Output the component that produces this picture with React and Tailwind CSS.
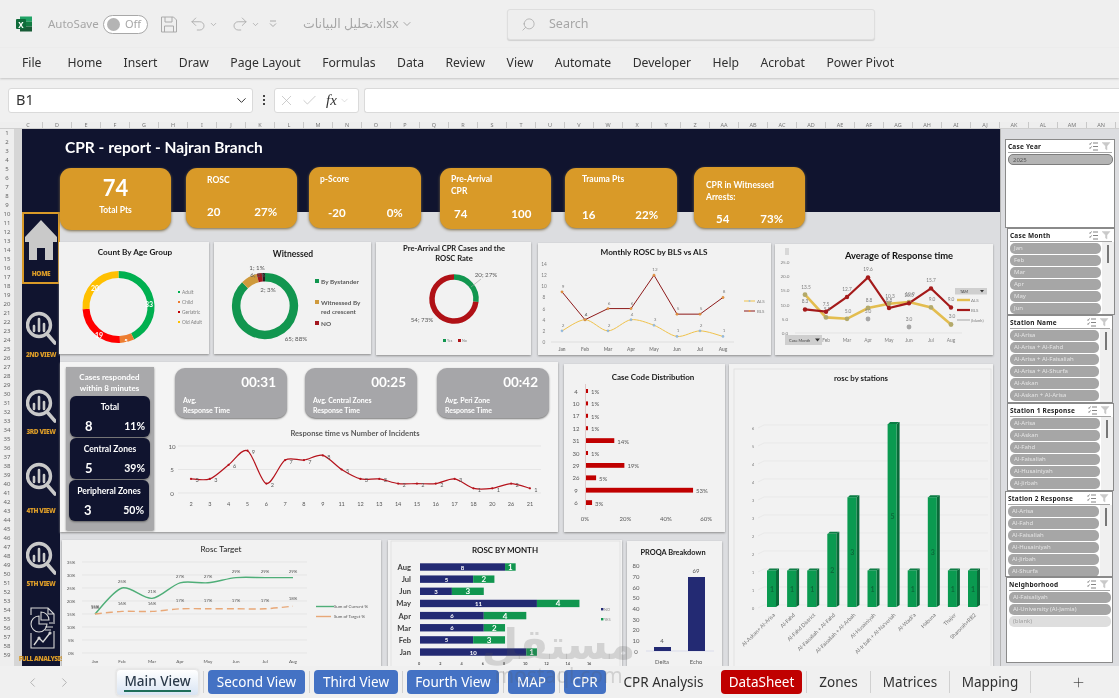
import { ChevronDown, ChevronLeft, ChevronRight, Undo2, Redo2, Search, X, Check, Plus } from 'lucide-react';

const GRID = '#dcdcdc';
const AXIS = '#7f7f7f';

const T = ({ x, y, s = 6, a = 'middle', f = AXIS, w = 400, children, ...rest }) => (
  <text x={x} y={y} fontSize={s} textAnchor={a} fill={f} fontWeight={w} dominantBaseline="central" {...rest}>
    {children}
  </text>
);

// viewBox is given in page pixels so the numbers can be read off the picture
const Chart = ({ box, children }) => (
  <svg viewBox={box} className="block w-full h-full">
    {children}
  </svg>
);

function arc(cx, cy, r, from, to) {
  const p = (f) => {
    const a = f * Math.PI * 2 - Math.PI / 2;
    return [cx + r * Math.cos(a), cy + r * Math.sin(a)];
  };
  const [x1, y1] = p(from);
  const [x2, y2] = p(to);
  return `M${x1} ${y1}A${r} ${r} 0 ${to - from > 0.5 ? 1 : 0} 1 ${x2} ${y2}`;
}

function smooth(pts) {
  let d = `M${pts[0][0]} ${pts[0][1]}`;
  for (let i = 0; i < pts.length - 1; i++) {
    const p0 = pts[i - 1] || pts[i];
    const p1 = pts[i];
    const p2 = pts[i + 1];
    const p3 = pts[i + 2] || p2;
    const k = 0.15;
    d += `C${p1[0] + (p2[0] - p0[0]) * k} ${p1[1] + (p2[1] - p0[1]) * k} ${p2[0] - (p3[0] - p1[0]) * k} ${p2[1] - (p3[1] - p1[1]) * k} ${p2[0]} ${p2[1]}`;
  }
  return d;
}

const line = (pts) => pts.map((p) => p.join(',')).join(' ');

function ExcelLogo() {
  return (
    <svg viewBox="0 0 16 16" className="w-4 h-4 shrink-0">
      <rect x="4" y="0.5" width="12" height="5" fill="#21a366" />
      <rect x="4" y="5.5" width="12" height="5" fill="#107c41" />
      <rect x="4" y="10.5" width="12" height="5" fill="#185c37" />
      <rect x="0" y="3" width="10" height="10" rx="1" fill="#0f6b3a" />
      <text x="5" y="8.2" fontSize="8" fontWeight="700" fill="#fff" textAnchor="middle" dominantBaseline="central">X</text>
    </svg>
  );
}

function TitleBar() {
  return (
    <div className="flex items-center h-[48px] bg-[#efefef] text-[#a6a6a6] text-[11.5px]">
      <div className="ml-[16px] w-[32px]"><ExcelLogo /></div>
      <div className="w-[55px]">AutoSave</div>
      <div className="flex items-center w-[45px] h-[19px] rounded-full border border-[#a8a8a8] bg-white pl-[3px] gap-[5px]">
        <span className="w-[13px] h-[13px] rounded-full bg-[#b4b4b4]" />
        <span className="text-[11px]">Off</span>
      </div>
      <svg viewBox="0 0 16 16" fill="none" stroke="#aaa" className="ml-[13px] w-[16px] h-[17px]">
        <path d="M.5.5h12l3 3v12H.5z" />
        <path d="M4 .5v5h7v-5M3.5 15.5v-6h9v6" />
      </svg>
      <Undo2 size={18} strokeWidth={1.1} className="ml-[12px]" />
      <ChevronDown size={9} className="ml-[2px]" />
      <Redo2 size={18} strokeWidth={1.1} className="ml-[13px]" />
      <ChevronDown size={9} className="ml-[2px]" />
      <svg viewBox="0 0 8 8" fill="none" stroke="#aaa" className="ml-[9px] w-[8px] h-[8px]">
        <path d="M1 1h6M1 3.5l3 3 3-3" />
      </svg>
      <div className="ml-[26px] w-[96px] text-[12.5px] whitespace-nowrap font-['Noto_Sans','DejaVu_Sans',sans-serif]">
        تحليل البيانات.xlsx
      </div>
      <ChevronDown size={12} className="ml-[2px]" />
      <div className="ml-[94px] w-[368px] h-[31px] flex items-center rounded-[3px] border border-[#dedede] bg-[#eeeeee] shadow-[0_1px_1px_#d0d0d0] pl-[13px] gap-[13px] text-[12.5px]">
        <Search size={15} strokeWidth={1.2} className="-scale-x-100" />
        Search
      </div>
    </div>
  );
}

function RibbonTabs() {
  const tabs = ['Home', 'Insert', 'Draw', 'Page Layout', 'Formulas', 'Data', 'Review', 'View', 'Automate', 'Developer', 'Help', 'Acrobat', 'Power Pivot'];
  return (
    <div className="flex items-center h-[30px] pt-[1px] bg-[#efefef] text-[12.2px] text-[#303030] shadow-[0_1px_2px_#c4c4c4] relative">
      <span className="ml-[22px] mr-[26px]">File</span>
      <div className="flex gap-[21.4px]">
        {tabs.map((t) => (
          <span key={t}>{t}</span>
        ))}
      </div>
    </div>
  );
}

function FormulaBar() {
  return (
    <div className="flex items-center h-[44px] bg-[#f0f0f0]">
      <div className="ml-[8px] w-[245px] h-[25px] flex items-center justify-between pl-[7px] pr-[3px] bg-white rounded-[3px] border border-[#dadada] text-[14.5px] text-[#333]">
        B1
        <ChevronDown size={15} strokeWidth={1.6} />
      </div>
      <div className="w-[21px] flex flex-col items-center gap-[2px]">
        <span className="w-[2px] h-[2px] bg-[#444]" />
        <span className="w-[2px] h-[2px] bg-[#444]" />
        <span className="w-[2px] h-[2px] bg-[#444]" />
      </div>
      <div className="w-[85px] h-[25px] flex items-center pl-[3px] bg-white rounded-[3px] border border-[#dadada] text-[#b8b8b8]">
        <X size={17} strokeWidth={1} />
        <Check size={17} strokeWidth={1} className="ml-[6px]" />
        <span className="ml-[8px] text-[15px] italic font-['Liberation_Serif',serif] text-[#333]">fx</span>
        <ChevronDown size={11} strokeWidth={1} className="ml-[2px]" />
      </div>
      <div className="ml-[5px] flex-1 h-[25px] bg-white border-y border-l border-[#dadada] rounded-l-[3px]" />
    </div>
  );
}

function ColumnHeaders() {
  const cols = 'C D E F G H I J K L M N O P Q R S T U V W X Y Z AA AB AC AD AE AF AG AH AI AJ AK AL AM AN'.split(' ');
  return (
    <div className="flex h-[7px] bg-[#eeeeee] pl-[14px] overflow-hidden border-b border-[#cfcfcf]">
      {cols.map((c) => (
        <span key={c} className="w-[29px] shrink-0 border-r border-[#c8c8c8] text-center text-[5.5px] leading-[6px] text-[#777]">
          {c}
        </span>
      ))}
    </div>
  );
}

function RowHeaders() {
  const rows = Array.from({ length: 59 }, (_, i) => i + 1);
  return (
    <div className="w-[14px] shrink-0 bg-[#eeeeee]">
      {rows.map((r) => (
        <div key={r} className="h-[9px] text-center text-[6px] leading-[9px] text-[#666]">
          {r}
        </div>
      ))}
    </div>
  );
}

function Magnifier() {
  return (
    <svg viewBox="0 0 30 34" className="w-[30px] h-[34px]" fill="none" stroke="#c9c9c9">
      <circle cx="13" cy="14" r="11.5" strokeWidth="3.4" />
      <path d="M22 24l7 8" strokeWidth="3.6" strokeLinecap="round" />
      <path d="M8 20v-5M13 20V8M18 20v-7" strokeWidth="2.6" strokeLinecap="round" />
    </svg>
  );
}

function NavLabel({ className = '', children }) {
  return (
    <div className={`h-[9px] w-[38px] flex justify-center whitespace-nowrap text-[6.5px] leading-[9px] font-black tracking-[-0.4px] text-[#d99a28] ${className}`}>
      {children}
    </div>
  );
}

function SideNav() {
  return (
    <div className="w-[38px] shrink-0 bg-[#10142f] flex flex-col items-center pt-[83px]">
      <div className="w-[38px] h-[72px] border-2 border-[#d99a28] flex flex-col items-center pt-[6px]">
        <svg viewBox="0 0 32 40" className="w-[32px] h-[40px]" fill="#c9c9c9">
          <path d="M16 0L32 17v5H28v18H20V28H12v12H4V22H0v-5z" />
        </svg>
        <NavLabel className="mt-[9px]">HOME</NavLabel>
      </div>
      <div className="mt-[27px]"><Magnifier /></div>
      <NavLabel className="mt-[5px]">2ND VIEW</NavLabel>
      <div className="mt-[30px]"><Magnifier /></div>
      <NavLabel className="mt-[4px]">3RD VIEW</NavLabel>
      <div className="mt-[26px]"><Magnifier /></div>
      <NavLabel className="mt-[10px]">4TH VIEW</NavLabel>
      <div className="mt-[26px]"><Magnifier /></div>
      <NavLabel className="mt-[4px]">5TH VIEW</NavLabel>
      <svg viewBox="0 0 30 42" className="mt-[19px] w-[30px] h-[42px]" fill="none" stroke="#d8d8d8" strokeWidth="1.1">
        <path d="M5 8V1h17l6 6v10M22 1v6h6" />
        <path d="M5 26v15h23V24" />
        <path d="M13 9a8 8 0 1 0 8 8h-8z" />
        <path d="M15 5a8 8 0 0 1 8 8h-8z" />
        <path d="M19 20h8M19 23h6M23 16h4" />
        <path d="M8 38l5-7 4 4 7-9" strokeWidth="1.4" />
        <circle cx="13" cy="31" r="1" />
        <circle cx="24" cy="26" r="1" />
      </svg>
      <NavLabel className="mt-[5px] text-[5.5px] tracking-[-0.5px]">FULL ANALYSIS</NavLabel>
    </div>
  );
}

function Kpi({ className, title, a, b, titleCls, rowCls }) {
  return (
    <div className={`flex flex-col rounded-[11px] bg-[#d99a28] shadow-[0_1px_3px_#7a6a45] text-white font-bold ${className}`}>
      <div className={`text-[8.5px] leading-[12px] ${titleCls}`}>
        {title.map((l) => (
          <div key={l}>{l}</div>
        ))}
      </div>
      <div className={`mt-auto flex text-[11.5px] leading-[14px] ${rowCls}`}>
        <span>{a}</span>
        <span>{b}</span>
      </div>
    </div>
  );
}

function KpiRow() {
  return (
    <div className="flex items-start -mt-[45px] relative">
      <div className="w-[111px] h-[62px] mt-[1px] rounded-[11px] bg-[#d99a28] shadow-[0_1px_3px_#7a6a45] text-white font-bold flex flex-col items-center pt-[7px]">
        <span className="text-[22px] leading-[26px]">74</span>
        <span className="mt-[3px] text-[8.5px] leading-[12px]">Total Pts</span>
      </div>
      <Kpi className="ml-[15px] mt-[1px] w-[111px] h-[60px]" title={['ROSC']} a="20" b="27%" titleCls="pl-[21px] pt-[6px]" rowCls="pl-[21px] pb-[9px] gap-[34px]" />
      <Kpi className="ml-[12px] w-[112px] h-[61px]" title={['p-Score']} a="-20" b="0%" titleCls="pl-[11px] pt-[6px]" rowCls="pl-[19px] pb-[8px] gap-[41px]" />
      <Kpi className="ml-[19px] mt-[1px] w-[111px] h-[61px]" title={['Pre-Arrival', 'CPR']} a="74" b="100" titleCls="pl-[11px] pt-[5px]" rowCls="pl-[14px] pb-[8px] gap-[44px]" />
      <Kpi className="ml-[14px] mt-[1px] w-[112px] h-[60px]" title={['Trauma Pts']} a="16" b="22%" titleCls="pl-[17px] pt-[5px]" rowCls="pl-[17px] pb-[6px] gap-[40px]" />
      <Kpi className="ml-[17px] w-[111px] h-[61px]" title={['CPR in Witnessed', 'Arrests:']} a="54" b="73%" titleCls="pl-[12px] pt-[12px]" rowCls="pl-[22px] pb-[2px] gap-[31px]" />
    </div>
  );
}

function Panel({ className = '', children }) {
  return <div className={`bg-[#f2f2f2] shadow-[0_1px_2px_#8c8c8c] overflow-hidden ${className}`}>{children}</div>;
}

function AgeDonut() {
  const parts = [[33, '#00b050'], [5, '#ed7d31'], [19, '#ff0000'], [20, '#ffc000']];
  const total = 77;
  let at = 0;
  return (
    <Panel className="w-[150px] h-[112px]">
      <Chart box="59 242 150 112">
        <T x={135} y={252} s={8.2} f="#1a1a1a" w={700}>Count By Age Group</T>
        {parts.map(([v, c]) => {
          const d = arc(118.5, 307, 32.5, at / total, (at + v) / total);
          at += v;
          return <path key={c} d={d} fill="none" stroke={c} strokeWidth="7" />;
        })}
        <T x={149} y={304} f="#fff" w={700} s={7}>33</T>
        <T x={126} y={340} f="#fff" w={700} s={6}>5</T>
        <T x={99} y={335} f="#fff" w={700} s={7}>19</T>
        <T x={95} y={288} f="#fff" w={700} s={7}>20</T>
        {[['Adult', '#00b050', 292], ['Child', '#ed7d31', 302], ['Geriatric', '#c00000', 312], ['Old Adult', '#ffc000', 322]].map(([l, c, y]) => (
          <g key={l}>
            <rect x={178} y={y - 1} width={2} height={2} fill={c} />
            <T x={182} y={y} a="start" s={4.8}>{l}</T>
          </g>
        ))}
      </Chart>
    </Panel>
  );
}

function WitnessedDonut() {
  const parts = [[65, '#11964f'], [6, '#cf9a3c'], [2, '#a3171f'], [1, '#222']];
  let at = 0;
  return (
    <Panel className="ml-[5px] w-[157px] h-[112px]">
      <Chart box="214 242 157 112">
        <T x={293} y={254} s={8.5} f="#1a1a1a" w={700}>Witnessed</T>
        {parts.map(([v, c]) => {
          const d = arc(265, 306, 28.8, at / 74, (at + v) / 74);
          at += v;
          return <path key={c} d={d} fill="none" stroke={c} strokeWidth="8.5" />;
        })}
        <T x={257} y={267} s={6.2} f="#595959">1; 1%</T>
        <T x={258} y={274.5} s={6.2} f="#595959">6; 8%</T>
        <T x={268} y={289} s={6.2} f="#595959">2; 3%</T>
        <T x={296} y={338} s={6.2} f="#595959">65; 88%</T>
        <rect x={315} y={279} width={4} height={4} fill="#11964f" />
        <T x={321} y={281} a="start" s={6.4} f="#595959" w={700}>By Bystander</T>
        <rect x={315} y={300} width={4} height={4} fill="#cf9a3c" />
        <T x={321} y={302} a="start" s={6.4} f="#595959" w={700}>Witnessed By</T>
        <T x={321} y={311} a="start" s={6.4} f="#595959" w={700}>red crescent</T>
        <rect x={315} y={321} width={4} height={4} fill="#a3171f" />
        <T x={321} y={323} a="start" s={6.4} f="#595959" w={700}>NO</T>
      </Chart>
    </Panel>
  );
}

function PreArrivalDonut() {
  return (
    <Panel className="ml-[5px] w-[155px] h-[113px]">
      <Chart box="376 242 155 113">
        <T x={454} y={247.5} s={7.6} f="#1a1a1a" w={700}>Pre-Arrival CPR Cases and the</T>
        <T x={454} y={257.5} s={7.6} f="#1a1a1a" w={700}>ROSC Rate</T>
        <path d={arc(454, 299, 22, 0, 0.27)} fill="none" stroke="#11964f" strokeWidth="5.5" />
        <path d={arc(454, 299, 22, 0.27, 1)} fill="none" stroke="#b01116" strokeWidth="5.5" />
        <path d="M471 287L481 279" stroke="#a0a0a0" strokeWidth="0.6" />
        <T x={486} y={274} s={6.2} f="#595959">20; 27%</T>
        <T x={422} y={319} s={6.2} f="#595959">54; 73%</T>
        <rect x={443} y={339} width={3} height={3} fill="#11964f" />
        <T x={447} y={340.5} a="start" s={3.6}>Yes</T>
        <rect x={458} y={339} width={3} height={3} fill="#b01116" />
        <T x={462} y={340.5} a="start" s={3.6}>No</T>
      </Chart>
    </Panel>
  );
}

function MonthlyRosc() {
  const months = ['Jan', 'Feb', 'Mar', 'Apr', 'May', 'Jun', 'Jul', 'Aug'];
  const x = (i) => 562 + i * 23;
  const y = (v) => 342 - v * 5.57;
  const bls = [9, 4, 6, 6, 12, 5, 5, 8];
  const als = [2, 4, 2, 4, 3, 1, 2, 1];
  return (
    <Panel className="ml-[7px] w-[233px] h-[112px] mt-[1px]">
      <Chart box="538 243 233 112">
        <T x={654} y={252} s={8.2} f="#1a1a1a" w={700}>Monthly ROSC by BLS vs ALS</T>
        {[0, 2, 4, 6, 8, 10, 12, 14].map((v) => (
          <T key={v} x={544} y={y(v)} s={4.8}>{v}</T>
        ))}
        <path d="M551 342H734" stroke="#d0d0d0" strokeWidth="0.6" />
        {months.map((m, i) => (
          <T key={m} x={x(i)} y={349} s={4.8} w={700}>{m}</T>
        ))}
        <path d={smooth(als.map((v, i) => [x(i), y(v)]))} fill="none" stroke="#f0c24b" strokeWidth="1" />
        <polyline points={line(bls.map((v, i) => [x(i), y(v)]))} fill="none" stroke="#8e1a1a" strokeWidth="1" />
        {als.map((v, i) => (
          <g key={i}>
            <circle cx={x(i)} cy={y(v)} r="1.1" fill="#9dc3e6" stroke="#5b8fc2" strokeWidth="0.3" />
            <T x={x(i) + 1} y={y(v) - 6} s={4.6}>{v}</T>
          </g>
        ))}
        {bls.map((v, i) => (
          <g key={i}>
            <circle cx={x(i)} cy={y(v)} r="1.2" fill="#ed9a44" stroke="#b5651d" strokeWidth="0.3" />
            <T x={x(i) + 1} y={y(v) - 6} s={4.6}>{v}</T>
          </g>
        ))}
        <path d="M744 301H755" stroke="#f0c24b" strokeWidth="1" />
        <circle cx={749.5} cy={301} r="1" fill="#9dc3e6" />
        <T x={757} y={301} a="start" s={4.4}>ALS</T>
        <path d="M744 311H755" stroke="#8e1a1a" strokeWidth="1" />
        <circle cx={749.5} cy={311} r="1" fill="#ed9a44" />
        <T x={757} y={311} a="start" s={4.4}>BLS</T>
      </Chart>
    </Panel>
  );
}

function AvgResponse() {
  const xs = [805, 826, 847, 868, 889, 909, 931, 951];
  const months = ['', 'Feb', 'Mar', 'Apr', 'May', 'Jun', 'Jul', 'Aug'];
  const y = (v) => 333 - v * 2.84;
  const als = [13.5, 5.5, 5, 8.8, 10.3, 10.9, 9, 3];
  const bls = [8.3, 7.5, 12.7, 19.6, 8.8, 10.5, 15.7, 9];
  return (
    <Panel className="ml-[4px] w-[218px] h-[111px] mt-[2px]">
      <Chart box="775 244 218 111">
        <rect x={785} y={248} width={4} height={7} fill="#d8d8d8" />
        <T x={899} y={255} s={9.4} f="#111" w={700}>Average of Response time</T>
        {[0, 5, 10, 15, 20, 25].map((v) => (
          <T key={v} x={785} y={y(v)} s={4.6}>{v.toFixed(1)}</T>
        ))}
        <path d="M795 333H962" stroke="#d8d8d8" strokeWidth="0.6" />
        {months.map((m, i) => (
          <T key={i} x={xs[i]} y={340} s={4.8}>{m}</T>
        ))}
        <polyline points={line(als.map((v, i) => [xs[i], y(v)]))} fill="none" stroke="#e3bd4f" strokeWidth="2.6" />
        <polyline points={line(bls.map((v, i) => [xs[i], y(v)]))} fill="none" stroke="#a41a1a" strokeWidth="2.2" />
        {als.map((v, i) => (
          <g key={i}>
            <circle cx={xs[i]} cy={y(v)} r="2.4" fill="#b3a96a" />
            <T x={xs[i] + 1} y={y(v) - 8} s={4.8}>{v.toFixed(1)}</T>
          </g>
        ))}
        {bls.map((v, i) => (
          <g key={i}>
            <circle cx={xs[i]} cy={y(v)} r="2.2" fill="#a41a1a" />
            <T x={xs[i]} y={y(v) - 8} s={4.8}>{v.toFixed(1)}</T>
          </g>
        ))}
        <circle cx={868} cy={319} r="2.4" fill="#a6a6a6" />
        <T x={868} y={311} s={4.8}>5.0</T>
        <circle cx={909} cy={327} r="2.4" fill="#a6a6a6" />
        <T x={909} y={319} s={4.8}>3.0</T>
        <rect x={955} y={288} width={32} height={6.5} fill="#cfcfcf" />
        <T x={960} y={291} a="start" s={3.8} f="#444">TAM</T>
        <path d="M980 290h4l-2 2.5z" fill="#333" />
        <rect x={785} y={335} width={37} height={10} fill="#cfcfcf" />
        <T x={789} y={340} a="start" s={4} f="#444">Case Month</T>
        <path d="M815 338.5h5l-2.5 3z" fill="#333" />
        <path d="M957 300H970" stroke="#e3bd4f" strokeWidth="2.4" />
        <T x={971} y={300} a="start" s={4.4}>ALS</T>
        <path d="M957 310H970" stroke="#a41a1a" strokeWidth="2.2" />
        <T x={971} y={310} a="start" s={4.4}>BLS</T>
        <path d="M957 320H970" stroke="#a6a6a6" strokeWidth="1" />
        <T x={971} y={320} a="start" s={4.4}>(blank)</T>
      </Chart>
    </Panel>
  );
}

function NavyBox({ title, a, b, className }) {
  return (
    <div className={`flex flex-col w-[80px] h-[41px] rounded-[6px] bg-[#10142f] shadow-[0_1px_2px_#666] text-white font-bold ${className}`}>
      <div className="pt-[6px] text-center text-[8.5px] leading-[11px]">{title}</div>
      <div className="mt-auto pb-[3px] pl-[15px] pr-[5px] flex items-center justify-between">
        <span className="text-[13px] leading-[15px]">{a}</span>
        <span className="text-[10.5px] leading-[15px]">{b}</span>
      </div>
    </div>
  );
}

function StatBox({ time, label, className }) {
  return (
    <div className={`flex flex-col w-[112px] h-[50px] rounded-[10px] bg-[#a6a6a9] shadow-[0_1px_2px_#777] text-white font-bold ${className}`}>
      <div className="pt-[4px] pr-[11px] text-right text-[13.5px] leading-[20px]">{time}</div>
      <div className="mt-[4px] pl-[8px] text-[7px] leading-[9.5px]">
        {label.map((l) => (
          <div key={l}>{l}</div>
        ))}
      </div>
    </div>
  );
}

function IncidentsChart() {
  const cats = [2, 3, 4, 5, 6, 7, 8, 9, 11, 12, 13, 14, 15, 16, 17, 18, 20, 26, 21];
  const vals = [3, 3, 6, 9, 2, 7, 7, 8, 5, 3, 3, 2, 2, 2, 3, 1, 1, 2, 1];
  const x = (i) => 191 + i * 18.83;
  const y = (v) => 493 - v * 4.7;
  return (
    <Chart box="154 425 404 107">
      <T x={355} y={433} s={7.6} f="#5a5a5a" w={700}>Response time vs Number of Incidents</T>
      {[0, 5, 10].map((v) => (
        <g key={v}>
          <path d={`M178 ${y(v)}H541`} stroke={GRID} strokeWidth="0.6" />
          <T x={172} y={y(v)} s={6.2} f="#595959">{v}</T>
        </g>
      ))}
      <path d={smooth(vals.map((v, i) => [x(i), y(v)]))} fill="none" stroke="#b5121b" strokeWidth="1.2" />
      {vals.map((v, i) => (
        <g key={i}>
          <circle cx={x(i)} cy={y(v)} r="1.1" fill="#b5121b" />
          <T x={x(i) + 6} y={y(v) + 1} s={5.6} f="#595959">{v}</T>
        </g>
      ))}
      {cats.map((c, i) => (
        <T key={i} x={x(i)} y={503} s={5.6} f="#595959">{c}</T>
      ))}
    </Chart>
  );
}

function ResponsePanel() {
  return (
    <div className="flex w-[498px] h-[170px] bg-[#f4f4f4] shadow-[0_1px_2px_#8c8c8c]">
      <div className="ml-[6px] mt-[5px] w-[88px] h-[163px] bg-[#a9a9ab] shadow-[0_1px_2px_#888] flex flex-col items-center">
        <div className="pt-[5px] pr-[1px] text-center text-[8px] leading-[11px] font-bold text-white">
          Cases responded<br />within 8 minutes
        </div>
        <NavyBox title="Total" a="8" b="11%" className="mt-[2px]" />
        <NavyBox title="Central Zones" a="5" b="39%" className="mt-[1px]" />
        <NavyBox title="Peripheral Zones" a="3" b="50%" className="mt-[1px] -ml-[2px]" />
      </div>
      <div className="flex-1 flex flex-col">
        <div className="flex items-start pt-[6px] pl-[21px] h-[63px]">
          <StatBox time="00:31" label={['Avg.', 'Response Time']} />
          <StatBox time="00:25" label={['Avg. Central Zones', 'Response Time']} className="ml-[18px]" />
          <StatBox time="00:42" label={['Avg. Peri Zone', 'Response Time']} className="ml-[20px]" />
        </div>
        <div className="h-[107px]"><IncidentsChart /></div>
      </div>
    </div>
  );
}

function CaseCodes() {
  const rows = [['4', 1], ['10', 1], ['17', 1], ['12', 1], ['31', 14], ['30', 1], ['29', 19], ['26', 5], ['9', 53], ['6', 3]];
  return (
    <Panel className="ml-[6px] mt-[2px] w-[161px] h-[168px]">
      <Chart box="564 364 161 168">
        <T x={653} y={377} s={8} f="#1a1a1a" w={700}>Case Code Distribution</T>
        <path d="M585.5 384V510" stroke="#d0b0b0" strokeWidth="0.6" />
        {rows.map(([l, v], i) => {
          const y = 391 + i * 12.4;
          return (
            <g key={i}>
              <T x={576} y={y} s={6} f="#595959">{l}</T>
              <rect x={586} y={y - (v > 1 ? 2.4 : 2)} width={v * 2.02} height={v > 1 ? 4.8 : 4} fill="#c00000" />
              <T x={586 + v * 2.02 + 3} y={y + 0.5} a="start" s={6} f="#595959">{v}%</T>
            </g>
          );
        })}
        {[0, 20, 40, 60].map((v) => (
          <T key={v} x={585 + v * 2.02} y={518} s={6} f="#595959">{v}%</T>
        ))}
      </Chart>
    </Panel>
  );
}

function RoscTarget() {
  const xs = [95, 122, 152, 180, 208, 236, 265, 293];
  const months = ['Jan', 'Feb', 'Mar', 'Apr', 'May', 'Jun', 'Jul', 'Aug'];
  const y = (v) => 653 - v * 2.6;
  const cur = [15, 25, 21, 27, 27, 29, 29, 29];
  const tgt = [15, 16, 16, 17, 17, 17, 17, 18];
  return (
    <Panel className="ml-[2px] w-[319px] h-[126px]">
      <Chart box="62 540 319 126">
        <T x={221} y={549} s={8.2} f="#222">Rosc Target</T>
        {[0, 5, 10, 15, 20, 25, 30, 35].map((v) => (
          <g key={v}>
            <path d={`M82 ${y(v)}H307`} stroke={GRID} strokeWidth="0.6" />
            <T x={71} y={y(v)} s={4.4} f="#555">{v}%</T>
          </g>
        ))}
        <path d={smooth(cur.map((v, i) => [xs[i], y(v)]))} fill="none" stroke="#4fae78" strokeWidth="1.4" />
        <path d={smooth(tgt.map((v, i) => [xs[i], y(v)]))} fill="none" stroke="#e8a878" strokeWidth="1.4" strokeDasharray="7 4" />
        {cur.map((v, i) => (
          <T key={i} x={xs[i]} y={y(v) - (i === 1 ? 7 : 6.5)} s={4.4} f="#555">{v}%</T>
        ))}
        {tgt.map((v, i) => (
          <T key={i} x={xs[i]} y={y(v) - 8} s={4.4} f="#555">{v}%</T>
        ))}
        {months.map((m, i) => (
          <T key={m} x={xs[i]} y={661} s={4.6} f="#555">{m}</T>
        ))}
        <path d="M316 606.5H334" stroke="#4fae78" strokeWidth="1.4" />
        <T x={334} y={606.5} a="start" s={4.4} f="#555">Sum of Current %</T>
        <path d="M316 616.5H331" stroke="#e8a878" strokeWidth="1.4" />
        <T x={334} y={616.5} a="start" s={4.4} f="#555">Sum of Target %</T>
      </Chart>
    </Panel>
  );
}

function RoscByMonth() {
  const rows = [['Aug', 8, 1], ['Jul', 5, 2], ['Jun', 3, 3], ['May', 11, 4], ['Apr', 6, 4], ['Mar', 6, 2], ['Feb', 5, 3], ['Jan', 10, 1]];
  const unit = 10.63;
  return (
    <Panel className="ml-[7px] w-[234px] h-[126px]">
      <Chart box="388 540 234 126">
        <rect x={391} y={541} width={229} height={130} fill="none" stroke="#d8d8d8" strokeWidth="0.6" />
        <T x={505} y={550} s={8} f="#1a1a1a" w={700}>ROSC BY MONTH</T>
        {rows.map(([m, a, b], i) => {
          const y = 567 + i * 12.15;
          return (
            <g key={m}>
              <T x={411} y={y} s={7.6} a="end" f="#404040" w={700}>{m}</T>
              <rect x={420} y={y - 3.7} width={a * unit} height={7.4} fill="#232a73" />
              <rect x={420 + a * unit} y={y - 3.7} width={b * unit} height={7.4} fill="#11964f" />
              <T x={420 + (a * unit) / 2} y={y} s={6} f="#fff" w={700}>{a}</T>
              <T x={420 + (a + b / 2) * unit} y={y} s={8} f="#fff" w={700}>{b}</T>
            </g>
          );
        })}
        {[0, 2, 4, 6, 8, 10, 12, 14, 16].map((v) => (
          <T key={v} x={419 + v * 10.63} y={663} s={3.8} f="#555" w={700}>{v}</T>
        ))}
        <rect x={601} y={608} width={2.4} height={2.4} fill="#232a73" />
        <T x={604} y={609} a="start" s={3.8} f="#888">NO</T>
        <rect x={601} y={618} width={2.4} height={2.4} fill="#11964f" />
        <T x={604} y={619} a="start" s={3.8} f="#888">YES</T>
      </Chart>
    </Panel>
  );
}

function Proqa() {
  return (
    <Panel className="ml-[5px] mt-[1px] w-[95px] h-[125px]">
      <Chart box="627 541 95 125">
        <T x={673} y={552} s={7.4} f="#1a1a1a" w={700}>PROQA Breakdown</T>
        {[0, 10, 20, 30, 40, 50, 60, 70, 80].map((v) => (
          <T key={v} x={636} y={651 - v * 1.065} s={6} f="#595959">{v}</T>
        ))}
        <path d="M646 651H714" stroke="#c9cfe6" strokeWidth="0.6" />
        <rect x={654} y={647} width={17} height={4} fill="#232a73" />
        <rect x={688} y={577} width={17} height={74} fill="#232a73" />
        <T x={662} y={640} s={6} f="#595959">4</T>
        <T x={696} y={570} s={6} f="#595959">69</T>
        <T x={662} y={661} s={5.8} f="#595959">Delta</T>
        <T x={696} y={661} s={5.8} f="#595959">Echo</T>
      </Chart>
    </Panel>
  );
}

function Stations() {
  const bars = [
    ['Al-Askan+ Al-Arisa', 1], ['Al-Fahd', 1], ['Al-Fahd District', 1], ['Al-Faisaliah + Al-Fahd', 2],
    ['Al-Faisaliah + Al-Arbah', 3], ['Al-Husainiyah', 1], ["Al-Ir bah + Al-Na'seriah", 5], ["Al-Wadi'a", 1],
    ['Habuna', 3], ['Thajer', 1], ['Sharorah+RB2', 1],
  ];
  const ticks = [0, 1, 1, 2, 2, 3, 3, 4, 4, 5, 6];
  return (
    <Panel className="ml-[2px] mt-[2px] w-[264px] h-[302px]">
      <Chart box="727 364 264 302">
        <rect x={732} y={369} width={257} height={310} fill="none" stroke="#dcdcdc" strokeWidth="0.7" />
        <T x={859} y={378} s={7.8} f="#222" w={700}>rosc by stations</T>
        {ticks.map((t, i) => {
          const y = 608 - i * 18;
          return (
            <g key={i}>
              <path d={`M756 ${y}L762 ${y - 3}H986`} stroke="#e2e2e2" strokeWidth="0.6" fill="none" />
              <T x={751} y={y} s={3.8} f="#777">{t}</T>
            </g>
          );
        })}
        {bars.map(([l, v], i) => {
          const cx = 770 + i * 20.1;
          const h = v * 36.6;
          const top = 607 - h;
          return (
            <g key={l}>
              <path d={`M${cx + 4} ${top}l3 -2v${h}l-3 2z`} fill="#0a6a39" />
              <path d={`M${cx - 4.5} ${top}l2 -2h9.5l-3 2z`} fill="#0c7d45" />
              <rect x={cx - 5} y={top} width={9} height={h} fill="#0a9a50" />
              <T x={cx} y={607 - h / 2} s={7} f="#0b6b3a" w={700}>{v}</T>
              <T x={cx + 2} y={614} s={5.4} a="end" f="#777" transform={`rotate(-45 ${cx + 2} 614)`}>{l}</T>
            </g>
          );
        })}
      </Chart>
    </Panel>
  );
}

function Slicer({ title, items, scroll, selected, dim, className }) {
  return (
    <div className={`flex flex-col bg-white border-[1.5px] border-[#8a8a8a] overflow-hidden shrink-0 ${className}`}>
      <div className="flex items-center justify-between h-[12px] mx-[2px] mt-[1px] border-b border-[#a6a6a6] shrink-0">
        <span className="text-[6.5px] font-bold text-[#222] tracking-[0.2px]">{title}</span>
        <span className="flex items-center gap-[4px] pr-[1px]">
          <svg viewBox="0 0 9 9" className="w-[9px] h-[9px]" fill="none" stroke="#777" strokeWidth="0.9">
            <path d="M0 1.5l1 1 1.5-2M0 5.5l1 1 1.5-2M4 1h5M4 4.5h5M4 8h5" />
          </svg>
          <svg viewBox="0 0 9 9" className="w-[9px] h-[9px]" fill="#c9c9c9" stroke="#c9c9c9" strokeWidth="0.5">
            <path d="M0 .5h8L5 4v4L3.5 7V4z" />
          </svg>
        </span>
      </div>
      <div className="flex flex-1 min-h-0">
        <div className="flex-1 min-w-0 flex flex-col gap-[1px] pt-[1px] pl-[2px] pr-[1px] overflow-hidden">
          {items.map((it) => (
            <div
              key={it}
              className={`h-[11px] shrink-0 rounded-[5px] pl-[4px] text-[6px] leading-[11px] whitespace-nowrap ${
                selected
                  ? 'bg-[#b4b4b4] border border-[#7d7d7d] text-[#555] leading-[9px]'
                  : it === dim
                    ? 'bg-[#dedede] text-[#a0a0a0]'
                    : 'bg-[#a6a6a6] text-[#e4e4e4]'
              }`}
            >
              {it}
            </div>
          ))}
        </div>
        {scroll && (
          <div className="w-[12px] shrink-0 bg-[#f0f0f0] flex justify-center pt-[3px]">
            <span className="w-[1.5px] h-[18px] bg-[#777]" />
          </div>
        )}
      </div>
    </div>
  );
}

function Slicers() {
  return (
    <div className="flex-1 flex flex-col pt-[10px] pl-[4px] bg-[#dcdde0] border-l border-[#b4b4b4]">
      <Slicer title="Case Year" items={['2025']} selected className="w-[110px] h-[89px]" />
      <Slicer title="Case Month" items={['Jan', 'Feb', 'Mar', 'Apr', 'May', 'Jun']} scroll className="ml-[2px] w-[108px] h-[87px]" />
      <Slicer title="Station Name" items={['Al-Arisa', 'Al-Arisa + Al-Fahd', 'Al-Arisa + Al-Faisaliah', 'Al-Arisa + Al-Shurfa', 'Al-Askan', 'Al-Askan + Al-Arisa']} scroll className="ml-[2px] w-[106px] h-[88px]" />
      <Slicer title="Station 1 Response" items={['Al-Arisa', 'Al-Askan', 'Al-Fahd', 'Al-Faisaliah', 'Al-Husainiyah', 'Al-Jirbah']} scroll className="ml-[2px] w-[107px] h-[88px]" />
      <Slicer title="Station 2 Response" items={['Al-Arisa', 'Al-Fahd', 'Al-Faisaliah', 'Al-Husainiyah', 'Al-Jirbah', 'Al-Shurfa']} scroll className="w-[108px] h-[86px]" />
      <Slicer title="Neighborhood" items={['Al-Faisaliyah', 'Al-University (Al-Jamia)', '(blank)']} dim="(blank)" className="ml-[1px] w-[107px] h-[86px]" />
    </div>
  );
}

function Dashboard() {
  return (
    <div className="w-[940px] shrink-0 font-['Lato',sans-serif]">
      <div className="h-[83px] bg-[#10142f] pl-[5px] pt-[8px] text-[15.5px] leading-[20px] font-bold text-white">
        CPR - report - Najran Branch
      </div>
      <KpiRow />
      <div className="flex items-start -ml-[1px] mt-[12px]">
        <AgeDonut />
        <WitnessedDonut />
        <PreArrivalDonut />
        <MonthlyRosc />
        <AvgResponse />
      </div>
      <div className="flex items-start mt-[7px]">
        <div className="w-[667px] shrink-0">
          <div className="flex items-start">
            <ResponsePanel />
            <CaseCodes />
          </div>
          <div className="flex items-start mt-[8px]">
            <RoscTarget />
            <RoscByMonth />
            <Proqa />
          </div>
        </div>
        <Stations />
      </div>
    </div>
  );
}

function Tab({ kind = 'plain', className = '', children }) {
  const styles = {
    plain: 'text-[#303030]',
    blue: 'bg-[#4472c4] text-white',
    red: 'bg-[#c00000] text-white',
  };
  return (
    <div className={`h-[24px] flex items-center justify-center rounded-[4px] text-[13.5px] whitespace-nowrap ${styles[kind]} ${className}`}>
      {children}
    </div>
  );
}

const Sep = () => <span className="block mx-[4px] w-px h-[22px] bg-[#d0d0d0] shrink-0" />;

function SheetTabs() {
  return (
    <div className="flex items-center h-[32px] bg-[#f0f0f0] text-[#a0a0a0]">
      <ChevronLeft size={15} strokeWidth={1.2} className="ml-[25px]" />
      <ChevronRight size={15} strokeWidth={1.2} className="ml-[17px]" />
      <div className="ml-[44px] w-[83px] h-[27px] flex flex-col items-center justify-center rounded-[4px] border border-[#e6e6e6] bg-gradient-to-b from-white to-[#d8e4f3] text-[13.5px] font-medium text-[#2b3a4a] shadow-[0_0_2px_#cfcfcf]">
        <span className="leading-[17px]">Main View</span>
        <span className="w-[67px] h-[2px] bg-[#1e6e5a]" />
      </div>
      <Sep />
      <Tab kind="blue" className="w-[97px]">Second View</Tab>
      <Sep />
      <Tab kind="blue" className="w-[84px]">Third View</Tab>
      <Sep />
      <Tab kind="blue" className="w-[92px]">Fourth View</Tab>
      <Sep />
      <Tab kind="blue" className="w-[47px]">MAP</Tab>
      <Sep />
      <Tab kind="blue" className="w-[42px]">CPR</Tab>
      <Tab className="w-[115px]">CPR Analysis</Tab>
      <Tab kind="red" className="w-[81px]">DataSheet</Tab>
      <Sep />
      <Tab className="w-[55px]">Zones</Tab>
      <Sep />
      <Tab className="w-[70px]">Matrices</Tab>
      <Sep />
      <Tab className="w-[72px]">Mapping</Tab>
      <Sep />
      <Plus size={15} strokeWidth={1} className="ml-[36px] text-[#333]" />
    </div>
  );
}

export default function App() {
  return (
    <div className="relative w-[1119px] h-[700px] overflow-hidden bg-white font-['Noto_Sans',sans-serif] blur-[0.3px]">
      <TitleBar />
      <RibbonTabs />
      <FormulaBar />
      <ColumnHeaders />
      <div className="flex h-[537px] overflow-hidden bg-[#dcdde0]">
        <RowHeaders />
        <div className="w-[8px] shrink-0 bg-[#d6d6d6]" />
        <SideNav />
        <Dashboard />
        <Slicers />
      </div>
      <SheetTabs />
      {/* mostaql watermark sits over the sheet */}
      <div className="absolute left-[486px] top-[622px] w-[145px] flex flex-col items-center text-[#555555]/20 pointer-events-none">
        <span className="text-[42px] leading-[46px] font-bold font-['DejaVu_Sans',sans-serif]" dir="rtl">مستقل</span>
        <span className="text-[21px] leading-[14px] font-['Noto_Sans',sans-serif]">mostaql.com</span>
      </div>
    </div>
  );
}
